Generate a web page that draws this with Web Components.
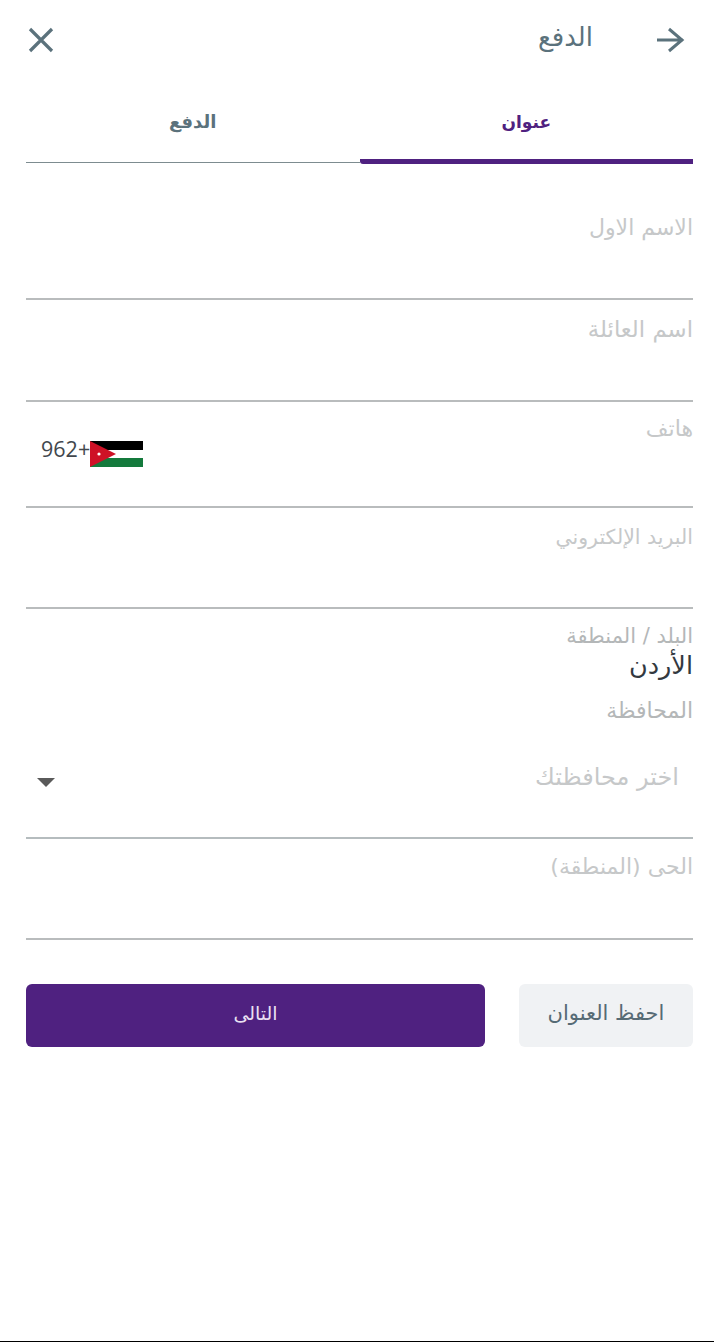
<!DOCTYPE html>
<html lang="ar" dir="rtl">
<head>
  <meta charset="UTF-8">
  <title>الدفع</title>
  <style>
    html, body { margin: 0; padding: 0; background: #fff; }
    body { font-family: "DejaVu Sans", "Noto Sans", sans-serif; height: 1342px; overflow: hidden; }
  </style>
</head>
<body>
  <checkout-page>
    <checkout-header title="الدفع"></checkout-header>
    <checkout-tabs first="عنوان" second="الدفع"></checkout-tabs>
    <form-field label="الاسم الاول" height="136" top="52"></form-field>
    <form-field label="اسم العائلة" height="102" top="17" size="22.8"></form-field>
    <phone-field label="هاتف" code="962+"></phone-field>
    <form-field label="البريد الإلكتروني" height="101" top="17" size="20.5"></form-field>
    <country-field label="البلد / المنطقة" value="الأردن"></country-field>
    <select-field label="المحافظة" placeholder="اختر محافظتك"></select-field>
    <form-field label="الحى (المنطقة)" height="101" top="16"></form-field>
    <form-actions save="احفظ العنوان" next="التالى"></form-actions>
  </checkout-page>

  <script>
    // Page shell: side padding and the black strip at the very bottom
    customElements.define('checkout-page', class extends HTMLElement {
      constructor() {
        super();
        this.attachShadow({ mode: 'open' }).innerHTML = `
          <style>
            :host { display: block; height: 1342px; box-sizing: border-box; padding: 0 21px 0 26px; border-bottom: 1px solid #000; }
          </style>
          <slot></slot>
        `;
      }
    });

    customElements.define('checkout-header', class extends HTMLElement {
      connectedCallback() {
        this.attachShadow({ mode: 'open' }).innerHTML = `
          <style>
            :host { display: flex; align-items: center; height: 80px; color: #5b727c; }
            svg { display: block; flex: none; }
            .back { margin-right: 8px; }
            h1 { margin: -6px 62px 0 0; font-size: 26px; font-weight: 400; flex: 1; line-height: 32px; }
            .close { margin-left: 2px; }
          </style>
          <svg class="back" width="30" height="26" viewBox="0 0 30 26" fill="none" stroke="#5b727c" stroke-width="3">
            <path d="M28 13H2M14 2 27 13 14 24"/>
          </svg>
          <h1>${this.getAttribute('title')}</h1>
          <svg class="close" width="26" height="26" viewBox="0 0 26 26" fill="none" stroke="#5b727c" stroke-width="3.2">
            <path d="M2 2 24 24M24 2 2 24"/>
          </svg>
        `;
      }
    });

    customElements.define('checkout-tabs', class extends HTMLElement {
      connectedCallback() {
        this.attachShadow({ mode: 'open' }).innerHTML = `
          <style>
            :host { display: flex; height: 84px; }
            div { flex: 1; box-sizing: border-box; text-align: center; font-size: 17px; font-weight: 700; padding-top: 28px; line-height: 28px; }
            .on { color: #4f2180; border-bottom: 5px solid #4f2180; border-radius: 0 0 0 3px; }
            .off { color: #5b727c; border-bottom: 1px solid #7d8c90; height: 83px; font-size: 18px; }
          </style>
          <div class="on">${this.getAttribute('first')}</div>
          <div class="off">${this.getAttribute('second')}</div>
        `;
      }
    });

    // Underlined text field, empty, with only a label on top
    customElements.define('form-field', class extends HTMLElement {
      connectedCallback() {
        const height = this.getAttribute('height');
        const top = this.getAttribute('top');
        const size = this.getAttribute('size') || 22;
        this.attachShadow({ mode: 'open' }).innerHTML = `
          <style>
            :host { display: block; box-sizing: border-box; height: ${height}px; padding-top: ${top}px; border-bottom: 2px solid #b9bcbd; }
            label { display: block; color: #c6c8c9; font-size: ${size}px; line-height: 24px; }
          </style>
          <label>${this.getAttribute('label')}</label>
        `;
      }
    });

    customElements.define('phone-field', class extends HTMLElement {
      connectedCallback() {
        this.attachShadow({ mode: 'open' }).innerHTML = `
          <style>
            :host { display: block; box-sizing: border-box; height: 106px; padding-top: 15px; border-bottom: 2px solid #b9bcbd; }
            label { display: block; color: #c6c8c9; font-size: 22px; line-height: 24px; }
            .num { display: flex; direction: ltr; align-items: flex-start; padding: 0 0 0 15px; margin-top: -2px; }
            span { font-family: "Open Sans", "Noto Sans", sans-serif; color: #42474d; font-size: 21.5px; line-height: 24px; margin-top: -2px; }
            svg { display: block; margin-top: 2px; }
          </style>
          <label>${this.getAttribute('label')}</label>
          <div class="num">
            <span>${this.getAttribute('code')}</span>
            <svg width="53" height="26" viewBox="0 0 53 26">
              <rect width="53" height="9" fill="#000"/>
              <rect y="9" width="53" height="8" fill="#fff"/>
              <rect y="17" width="53" height="9" fill="#147a3c"/>
              <path d="M0 0 26 13 0 26Z" fill="#ce1126"/>
              <circle cx="9" cy="13" r="1.6" fill="#fff"/>
            </svg>
          </div>
        `;
      }
    });

    customElements.define('country-field', class extends HTMLElement {
      connectedCallback() {
        this.attachShadow({ mode: 'open' }).innerHTML = `
          <style>
            :host { display: block; padding-top: 15px; }
            label { display: block; color: #b4b7b8; font-size: 21px; line-height: 24px; }
            div { color: #33393f; font-size: 25.5px; line-height: 34px; }
          </style>
          <label>${this.getAttribute('label')}</label>
          <div>${this.getAttribute('value')}</div>
        `;
      }
    });

    customElements.define('select-field', class extends HTMLElement {
      connectedCallback() {
        this.attachShadow({ mode: 'open' }).innerHTML = `
          <style>
            :host { display: block; box-sizing: border-box; height: 157px; padding-top: 17px; border-bottom: 2px solid #b5bcbe; }
            label { display: block; color: #b4b7b8; font-size: 22px; line-height: 24px; }
            .row { display: flex; align-items: center; justify-content: space-between; margin-top: 39px; padding: 0 14px 0 11px; height: 30px; color: #c6c8c9; font-size: 24px; }
            i { display: block; width: 0; height: 0; margin-top: 10px; border-left: 9px solid transparent; border-right: 9px solid transparent; border-top: 9px solid #5a5a5a; }
          </style>
          <label>${this.getAttribute('label')}</label>
          <div class="row">
            <span>${this.getAttribute('placeholder')}</span>
            <i></i>
          </div>
        `;
      }
    });

    customElements.define('form-actions', class extends HTMLElement {
      connectedCallback() {
        this.attachShadow({ mode: 'open' }).innerHTML = `
          <style>
            :host { display: flex; gap: 34px; margin-top: 44px; height: 63px; }
            button { font: inherit; font-size: 21px; border: 0; border-radius: 6px; padding: 0 0 6px; }
            .save { width: 174px; background: #f0f2f4; color: #566b75; }
            .next { flex: 1; background: #4f2180; color: #e9e0f2; font-size: 19px; }
          </style>
          <button class="save">${this.getAttribute('save')}</button>
          <button class="next">${this.getAttribute('next')}</button>
        `;
      }
    });
  </script>
</body>
</html>
